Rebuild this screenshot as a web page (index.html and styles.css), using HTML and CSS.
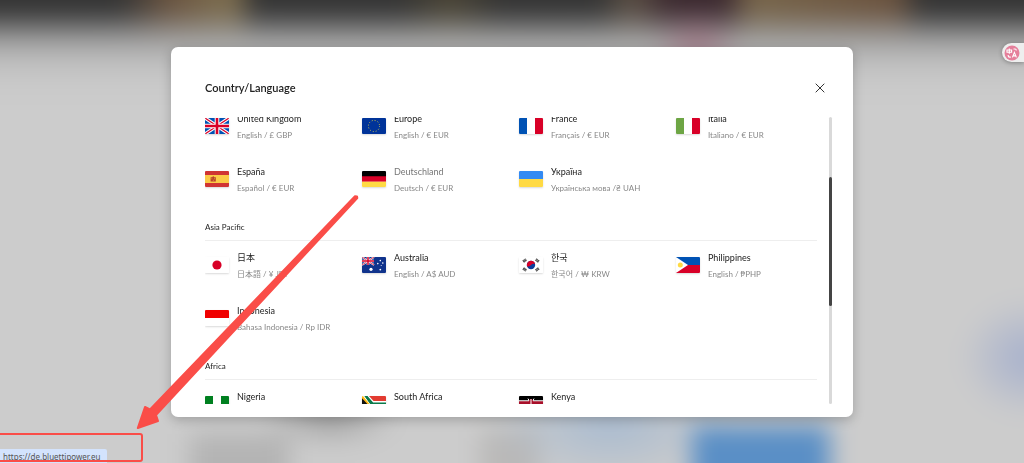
FILE: index.html
```html
<!DOCTYPE html>
<html lang="en">
<head>
    <meta charset="UTF-8">
    <meta name="viewport" content="width=device-width, initial-scale=1.0">
    <title>Country/Language</title>
    <link rel="stylesheet" href="styles.css">
</head>
<body>

    <!-- Blurred page behind the dialog -->
    <div class="backdrop"></div>

    <!-- Country dialog -->
    <main class="modal" role="dialog" aria-labelledby="modal-title">
        <header class="modal-header">
            <h1 id="modal-title">Country/Language</h1>
            <button class="close" type="button" aria-label="Close">
                <svg viewBox="0 0 10 10"><path d="M.7.7l8.6 8.6M9.3.7L.7 9.3"/></svg>
            </button>
        </header>

        <div class="modal-body">
            <div class="list">
                <section class="region region-first">
                    <div class="countries">
                        <a class="country" href="#">
                            <svg class="flag" viewBox="0 0 24 16">
                                <path fill="#0052b4" d="M0 0h24v16H0z"/>
                                <path stroke="#fff" stroke-width="3.4" d="M0 0l24 16M24 0L0 16"/>
                                <path stroke="#d80027" stroke-width="1.2" d="M0 0l24 16M24 0L0 16"/>
                                <path stroke="#fff" stroke-width="4.6" d="M12 0v16M0 8h24"/>
                                <path stroke="#d80027" stroke-width="2.6" d="M12 0v16M0 8h24"/>
                            </svg>
                            <span class="info"><span class="name">United Kingdom</span><span class="lang">English / £ GBP</span></span>
                        </a>
                        <a class="country" href="#">
                            <svg class="flag" viewBox="0 0 24 16">
                                <path fill="#003399" d="M0 0h24v16H0z"/>
                                <circle cx="12" cy="8" r="5.6" fill="none" stroke="#c9c04a" stroke-width="1" stroke-dasharray="1 1.93"/>
                            </svg>
                            <span class="info"><span class="name">Europe</span><span class="lang">English / € EUR</span></span>
                        </a>
                        <a class="country" href="#">
                            <svg class="flag" viewBox="0 0 24 16">
                                <path fill="#fff" d="M0 0h24v16H0z"/>
                                <path fill="#0052b4" d="M0 0h8v16H0z"/>
                                <path fill="#d80027" d="M16 0h8v16h-8z"/>
                            </svg>
                            <span class="info"><span class="name">France</span><span class="lang">Français / € EUR</span></span>
                        </a>
                        <a class="country" href="#">
                            <svg class="flag" viewBox="0 0 24 16">
                                <path fill="#fff" d="M0 0h24v16H0z"/>
                                <path fill="#6da544" d="M0 0h8v16H0z"/>
                                <path fill="#d80027" d="M16 0h8v16h-8z"/>
                            </svg>
                            <span class="info"><span class="name">Italia</span><span class="lang">Italiano / € EUR</span></span>
                        </a>
                        <a class="country" href="#">
                            <svg class="flag" viewBox="0 0 24 16">
                                <path fill="#d03433" d="M0 0h24v16H0z"/>
                                <path fill="#fbca46" d="M0 4h24v8H0z"/>
                                <path fill="#b8402a" d="M5.6 6.2h1.6l1-1.1 1 1.1h1.6v4.3H5.6z"/>
                                <path fill="#fbca46" d="M6.6 7.2h.6v1h-.6zM9.2 7.2h.6v1h-.6zM7.9 8.7h.6v1h-.6z"/>
                            </svg>
                            <span class="info"><span class="name">España</span><span class="lang">Español / € EUR</span></span>
                        </a>
                        <a class="country active" href="https://de.bluettipower.eu">
                            <svg class="flag" viewBox="0 0 24 16">
                                <path fill="#000" d="M0 0h24v6H0z"/>
                                <path fill="#d80027" d="M0 5.3h24v5.4H0z"/>
                                <path fill="#ffda44" d="M0 10.7h24V16H0z"/>
                            </svg>
                            <span class="info"><span class="name">Deutschland</span><span class="lang">Deutsch / € EUR</span></span>
                        </a>
                        <a class="country" href="#">
                            <svg class="flag" viewBox="0 0 24 16">
                                <path fill="#338af3" d="M0 0h24v8H0z"/>
                                <path fill="#ffda44" d="M0 8h24v8H0z"/>
                            </svg>
                            <span class="info"><span class="name">Україна</span><span class="lang">Українська мова /₴ UAH</span></span>
                        </a>
                    </div>
                </section>

                <section class="region">
                    <h2>Asia Pacific</h2>
                    <div class="countries">
                        <a class="country" href="#">
                            <svg class="flag" viewBox="0 0 24 16">
                                <path fill="#fff" d="M0 0h24v16H0z"/>
                                <circle cx="12" cy="8" r="4.6" fill="#d80027"/>
                            </svg>
                            <span class="info" lang="ja"><span class="name">日本</span><span class="lang">日本語 / ¥ JPY</span></span>
                        </a>
                        <a class="country" href="#">
                            <svg class="flag" viewBox="0 0 24 16">
                                <path fill="#10338c" d="M0 0h24v16H0z"/>
                                <path stroke="#fff" stroke-width="1.8" d="M0 0l12 8M12 0L0 8"/>
                                <path stroke="#d80027" stroke-width=".8" d="M0 0l12 8M12 0L0 8"/>
                                <path stroke="#fff" stroke-width="2.6" d="M6 0v8M0 4h12"/>
                                <path stroke="#d80027" stroke-width="1.5" d="M6 0v8M0 4h12"/>
                                <g fill="#fff">
                                    <circle cx="9" cy="12.3" r="1.6"/>
                                    <circle cx="18.3" cy="3.6" r=".8"/>
                                    <circle cx="15.8" cy="6.6" r=".8"/>
                                    <circle cx="20.8" cy="6" r=".8"/>
                                    <circle cx="19.2" cy="8.4" r=".5"/>
                                    <circle cx="18.3" cy="12.6" r=".9"/>
                                </g>
                            </svg>
                            <span class="info"><span class="name">Australia</span><span class="lang">English / A$ AUD</span></span>
                        </a>
                        <a class="country" href="#">
                            <svg class="flag" viewBox="0 0 24 16">
                                <path fill="#fff" d="M0 0h24v16H0z"/>
                                <circle cx="12" cy="8" r="4.2" fill="#0a3c9c"/>
                                <path fill="#d80027" d="M8.1 9.5A4.2 4.2 0 1 1 16.1 7q-2.2-1-4.1 1t-3.9 1.5z"/>
                                <path stroke="#333" stroke-width="2.8" stroke-dasharray=".8 .3" d="M4.2 4.7l3-2.2M16.8 2.5l3 2.2M4.2 11.3l3 2.2M16.8 13.5l3-2.2"/>
                            </svg>
                            <span class="info" lang="ko"><span class="name">한국</span><span class="lang">한국어 / ₩ KRW</span></span>
                        </a>
                        <a class="country" href="#">
                            <svg class="flag" viewBox="0 0 24 16">
                                <path fill="#0052b4" d="M0 0h24v8H0z"/>
                                <path fill="#d80027" d="M0 8h24v8H0z"/>
                                <path fill="#fff" d="M0 0l12 8-12 8z"/>
                                <circle cx="4.3" cy="8" r="2.5" fill="#ffda44"/>
                            </svg>
                            <span class="info"><span class="name">Philippines</span><span class="lang">English / ₱PHP</span></span>
                        </a>
                        <a class="country" href="#">
                            <svg class="flag" viewBox="0 0 24 16">
                                <path fill="#fff" d="M0 0h24v16H0z"/>
                                <path fill="#f00000" d="M0 0h24v8H0z"/>
                            </svg>
                            <span class="info"><span class="name">Indonesia</span><span class="lang">Bahasa Indonesia / Rp IDR</span></span>
                        </a>
                    </div>
                </section>

                <section class="region">
                    <h2>Africa</h2>
                    <div class="countries">
                        <a class="country" href="#">
                            <svg class="flag" viewBox="0 0 24 16">
                                <path fill="#fff" d="M0 0h24v16H0z"/>
                                <path fill="#008020" d="M0 0h8v16H0zM16 0h8v16h-8z"/>
                            </svg>
                            <span class="info"><span class="name">Nigeria</span></span>
                        </a>
                        <a class="country" href="#">
                            <svg class="flag" viewBox="0 0 24 16">
                                <path fill="#fff" d="M0 0h24v16H0z"/>
                                <path fill="#e23b30" d="M7 0h17v5H11.5z"/>
                                <path fill="#1a3a9c" d="M11.5 11H24v5H7z"/>
                                <path fill="#0b7a4b" d="M2 0h3.5l5.6 6.5H24v3H11.1L5.5 16H2z"/>
                                <path fill="#fff" d="M0 0h2.5l6 8-6 8H0z"/>
                                <path fill="#0b7a4b" d="M2.5 0H5l5.5 8L5 16H2.5l5.7-8z"/>
                                <path fill="#ffb915" d="M0 0h1l6.5 8L1 16H0z"/>
                                <path fill="#111" d="M0 2.2L5.4 8 0 13.8z"/>
                            </svg>
                            <span class="info"><span class="name">South Africa</span></span>
                        </a>
                        <a class="country" href="#">
                            <svg class="flag" viewBox="0 0 24 16">
                                <path fill="#fff" d="M0 0h24v16H0z"/>
                                <path fill="#000" d="M0 0h24v4.3H0z"/>
                                <path fill="#a8102a" d="M0 5.3h24v5.4H0z"/>
                                <path fill="#0b7a2b" d="M0 11.7h24V16H0z"/>
                                <path stroke="#fff" stroke-width="1" d="M9 2.6l6 11M15 2.6l-6 11"/>
                                <ellipse cx="12" cy="8" rx="2.3" ry="5" fill="#a8102a"/>
                                <path fill="#fff" d="M11.5 3h1v10h-1z"/>
                            </svg>
                            <span class="info"><span class="name">Kenya</span></span>
                        </a>
                    </div>
                </section>
            </div>
            <div class="scrollbar"><div class="thumb"></div></div>
        </div>
    </main>

    <!-- Translate extension tab -->
    <button class="translate" type="button" aria-label="Translate">
        <svg viewBox="0 0 16 16">
            <circle cx="8" cy="8" r="7.5" fill="#e57f9b"/>
            <g fill="none" stroke="#fff" stroke-width="1.1">
                <path d="M3 5h4.6v2.3H3zM5.3 3.6v5.2"/>
                <path d="M9.5 4h1.6q1.2 0 1.2 1.6M4.2 10v.8q0 1.3 1.6 1.3h1"/>
                <path d="M8.4 12.4l2-5 2 5M9.1 10.9h2.6"/>
            </g>
        </svg>
    </button>

    <!-- Link preview and annotation -->
    <div class="status">https://de.bluettipower.eu</div>
    <div class="highlight"></div>
    <svg class="arrow" viewBox="0 0 224 236">
        <path d="M221 1.5L219 1.2 14 214.500 9 212 1.800 233 22 226 20 220 221.300 3z"/>
    </svg>

</body>
</html>
```

FILE: styles.css
```css
* {
    box-sizing: border-box;
}
body {
    margin: 0;
    height: 100vh;
    padding-top: 1px;
    overflow: hidden;
    display: flex;
    align-items: center;
    justify-content: center;
    background-color: #ccc;
    font-family: Lato, "Noto Sans CJK JP", "Noto Sans CJK KR", sans-serif;
    color: #222;
}
h1, h2 {
    margin: 0;
    font-weight: 400;
}
button {
    padding: 0;
    border: none;
    background: none;
    cursor: pointer;
}
.backdrop {
    position: fixed;
    inset: -30px;
    filter: blur(12px);
    background:
        radial-gradient(ellipse 70px 60px at calc(100% - 25px) 388px, rgba(155, 168, 205, 0.8), transparent),
        linear-gradient(#5a8fc6, #5a8fc6) 722px 456px / 138px 80px no-repeat,
        radial-gradient(ellipse 120px 60px at 640px 455px, rgba(165, 185, 208, 0.9), transparent),
        radial-gradient(ellipse 70px 30px at 360px 446px, rgba(120, 120, 120, 0.6), transparent),
        linear-gradient(#b4b4b4, #b4b4b4) 220px 464px / 100px 60px no-repeat,
        linear-gradient(#bab9b8, #bab9b8) 510px 460px / 60px 60px no-repeat,
        radial-gradient(ellipse 45px 40px at 727px 78px, rgba(160, 105, 125, 0.7), transparent),
        linear-gradient(rgba(204, 204, 204, 0) 40px, #9c9c9c 68px, #bababa 86px, #c8c8c8 106px, #ccc 130px),
        linear-gradient(90deg, #333 150px, #6a5440 200px, #7a6a4c 250px, #7a6a4c 268px, #333 282px, #333 430px, #4a4434 480px, #333 530px, #333 630px, #5c5044 660px, #3a282e 700px, #3a282e 756px, #77654a 780px, #6a523e 926px, #333 950px);
}
.modal {
    position: relative;
    display: flex;
    flex-direction: column;
    width: 66.6%;
    height: 80vh;
    padding: 0 21px 13px 34px;
    border-radius: 7px;
    background-color: #fff;
    box-shadow: 0 3px 12px rgba(0, 0, 0, 0.22);
}
.modal-header {
    display: flex;
    align-items: center;
    justify-content: space-between;
    height: 70px;
    padding: 12px 7px 0 0;
}
.modal-header h1 {
    font-size: 11px;
    font-weight: 600;
}
.close {
    width: 10px;
    height: 10px;
    display: flex;
}
.close svg {
    width: 10px;
    height: 10px;
    stroke: #333;
    stroke-width: 1;
}
.modal-body {
    flex: 1;
    min-height: 0;
    display: flex;
    gap: 12px;
}
.list {
    flex: 1;
    overflow: hidden;
}
.region {
    margin-bottom: 23px;
}
/* list is scrolled a little past the first row */
.region-first {
    margin-top: -6px;
}
.region h2 {
    padding-bottom: 5px;
    margin-bottom: 9px;
    border-bottom: 1px solid #eee;
    font-size: 8px;
    line-height: 16px;
}
.countries {
    display: grid;
    grid-template-columns: repeat(4, 1fr);
    row-gap: 21px;
    margin-right: -16px;
}
.country {
    display: flex;
    gap: 8px;
    min-height: 32px;
    color: #222;
    text-decoration: none;
    white-space: nowrap;
}
.flag {
    flex: none;
    width: 24px;
    height: 16px;
    margin-top: 7px;
    border-radius: 1px;
    box-shadow: 0 1px 2px rgba(0, 0, 0, 0.15);
}
.info {
    display: flex;
    flex-direction: column;
    line-height: 16px;
}
.name {
    font-size: 9px;
}
.lang {
    font-size: 8px;
    color: #888;
}
.active .name {
    color: #777;
}
.scrollbar {
    width: 3px;
    border-radius: 2px;
    background-color: #d9d9d9;
}
.thumb {
    height: 45%;
    margin-top: 60px;
    border-radius: 2px;
    background-color: #444;
}
.translate {
    position: fixed;
    top: 43px;
    right: 0;
    width: 22px;
    height: 19px;
    padding-left: 2px;
    display: flex;
    align-items: center;
    border-radius: 10px 0 0 10px;
    background-color: #eee;
    box-shadow: 0 1px 4px rgba(0, 0, 0, 0.3);
}
.translate svg {
    width: 16px;
    height: 16px;
}
.status {
    position: fixed;
    left: 0;
    bottom: 0;
    height: 14px;
    padding: 0 7px 0 3px;
    border-radius: 0 2px 0 0;
    background-color: #d3e3fd;
    color: #555;
    font: 8px/15px "Noto Sans", sans-serif;
}
.highlight {
    position: fixed;
    left: -4px;
    bottom: 1px;
    width: 147px;
    height: 29px;
    border: 2px solid #fa4d48;
    border-radius: 3px;
}
.arrow {
    position: fixed;
    left: 136px;
    bottom: 32px;
    width: 224px;
    height: 236px;
    fill: #fa4d48;
    stroke: #fa4d48;
    stroke-width: 2;
    stroke-linejoin: round;
}
```
